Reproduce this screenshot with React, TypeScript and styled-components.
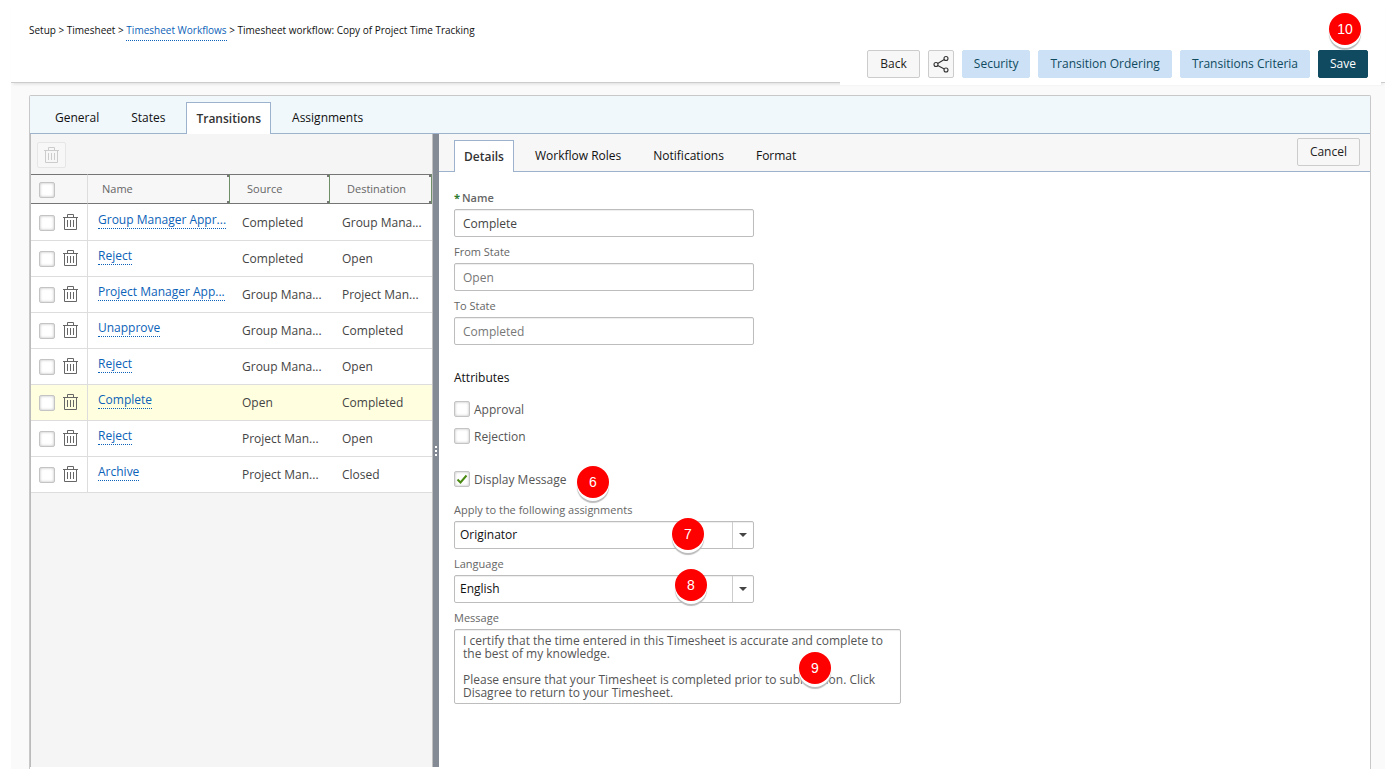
import React from "react";
import styled, { createGlobalStyle, css } from "styled-components";

const GlobalStyle = createGlobalStyle`
  *, *::before, *::after { box-sizing: border-box; }
  html, body, #root { height: 100%; }
  body {
    margin: 0;
    background: #fff;
    color: #111;
    font-family: "Open Sans", "Noto Sans", sans-serif;
    font-size: 12px;
    line-height: 16px;
  }
  button, input, select, textarea { font: inherit; color: inherit; margin: 0; }
`;

const Page = styled.div`
  min-height: 100%;
  display: flex;
  flex-direction: column;
  padding: 0 12px 12px 11px;
`;

const Header = styled.header`
  display: flex;
  justify-content: space-between;
  height: 83px;
  border-bottom: 1px solid #ccc;
  box-shadow: 0 3px 3px -2px #ddd;
  position: relative;
`;

const Breadcrumb = styled.nav`
  padding: 22px 0 0 18px;
  font-size: 10px;
  white-space: nowrap;

  a {
    color: #0b62b8;
    text-decoration: none;
    border-bottom: 1px dotted #0b62b8;
    padding-bottom: 3px;
  }
`;

const Actions = styled.div`
  display: flex;
  align-items: flex-start;
  gap: 8px;
  height: 85px;
  padding: 50px 13px 0 27px;
  margin-right: 4px;
  background: #fff;
`;

type Tone = "plain" | "soft" | "primary";

const tones = {
  plain: css`
    background: #f7f7f7;
    border-color: #ccc;
    color: #222;
  `,
  soft: css`
    background: #cce1f6;
    border-color: #cce1f6;
    color: #0f4a60;
  `,
  primary: css`
    background: #0f4a60;
    border-color: #0f4a60;
    color: #fff;
  `,
};

const Button = styled.button<{ $tone?: Tone }>`
  display: inline-flex;
  align-items: center;
  justify-content: center;
  height: 28px;
  padding: 0 ${(p) => (p.$tone ? 11 : 12)}px;
  border: 1px solid;
  border-radius: 2px;
  white-space: nowrap;
  ${(p) => tones[p.$tone ?? "plain"]}
`;

const ShareButton = styled(Button)`
  padding: 0 4px;
`;

const DeleteButton = styled(Button)`
  width: 29px;
  height: 26px;
  padding: 0;
  border-color: #e6e6e6;
  color: #ccc;
`;

const Anchor = styled.span`
  position: relative;
  display: inline-flex;
`;

const Badge = styled.span<{ $left: number; $top: number }>`
  position: absolute;
  left: ${(p) => p.$left}px;
  top: ${(p) => p.$top}px;
  width: 32px;
  height: 32px;
  border-radius: 50%;
  background: #f00;
  box-shadow: 0 3px 0 #fff, 0 5px 1px #bbb;
  color: #fff;
  font: 14px/32px "Liberation Sans", Arial, sans-serif;
  text-align: center;
  pointer-events: none;
  z-index: 2;
`;

const Body = styled.main`
  flex: 1;
  display: flex;
  flex-direction: column;
  padding: 12px 14px 0 18px;
  background: #fafafa;
`;

const Panel = styled.section`
  flex: 1;
  display: flex;
  flex-direction: column;
  border: 1px solid #c8c8c8;
  border-bottom: 0;
  border-radius: 2px 2px 0 0;
  background: #fff;
`;

const TabBar = styled.div<{ $main?: boolean }>`
  display: flex;
  align-items: flex-end;
  height: 38px;
  padding-left: ${(p) => (p.$main ? 9 : 10)}px;
  border-bottom: 1px solid #9db2cd;
  background: ${(p) => (p.$main ? "#f0f8fc" : "#f7f7f7")};
`;

const Tab = styled.button<{ $active?: boolean }>`
  height: 32px;
  margin-bottom: -1px;
  border: 1px solid transparent;
  border-bottom: 0;
  background: transparent;
  white-space: nowrap;
  ${(p) =>
    p.$active
      ? css`
          margin-left: 5px;
          margin-right: 5px;
          padding: 0 9px;
          background: #fff;
          border-color: #9db2cd;
          color: #333;
          font-weight: 600;
        `
      : css`
          margin-left: 15px;
          margin-right: 15px;
          padding: 0 0 1px;
        `}
`;

const Split = styled.div`
  flex: 1;
  display: grid;
  grid-template-columns: 402px 7px minmax(0, 1fr);
  padding-bottom: 2px;
`;

const ListPane = styled.div`
  border-left: 1px solid #bbb;
  background: #f5f5f5;
`;

const ListTools = styled.div`
  height: 40px;
  padding: 8px 6px;
`;

const Splitter = styled.div`
  display: flex;
  align-items: center;
  justify-content: center;
  border-left: 1px solid #c0c0c0;
  background: #848b94;
`;

const Grip = styled.span`
  width: 2px;
  height: 10px;
  background: repeating-linear-gradient(#fff 0 2px, transparent 2px 4px);
`;

const Grid = styled.table`
  width: 100%;
  table-layout: fixed;
  border-collapse: separate;
  border-spacing: 0;
  color: #444;
`;

const HeadCell = styled.th`
  height: 30px;
  padding: 0 0 0 17px;
  border: solid #757575;
  border-width: 1px 0;
  border-right: 1px solid #6f8f68;
  background:
    linear-gradient(#757575, #757575) right top / 2px 2px no-repeat,
    linear-gradient(#757575, #757575) right bottom / 2px 2px no-repeat,
    #f7f7f7;
  color: #666;
  font-size: 11px;
  font-weight: 400;
  text-align: left;
`;

const NameHead = styled(HeadCell)`
  padding-left: 14px;
`;

const CheckHead = styled(HeadCell)`
  padding: 2px 8px 0;
  border-right-color: #ddd;
  background: #f7f7f7;
`;

const Cell = styled.td`
  height: 36px;
  padding: 1px 0 0 12px;
  border-bottom: 1px solid #ddd;
  white-space: nowrap;
`;

const Row = styled.tr<{ $selected?: boolean }>`
  background: ${(p) => (p.$selected ? "#ffffdf" : "#fff")};

  &:first-child ${Cell} { height: 37px; }
`;

const ToolCell = styled(Cell)`
  padding: 0 8px;
  border-right: 1px solid #ddd;
`;

const LinkCell = styled(Cell)`
  padding: 0 0 4px 10px;

  a {
    display: inline-block;
    vertical-align: middle;
    height: 17px;
    max-width: 100%;
    color: #0b62b8;
    text-decoration: none;
    border-bottom: 1px dotted #0b62b8;
  }
`;

const RowTools = styled.div`
  display: flex;
  align-items: flex-end;
  gap: 8px;
  height: 17px;
`;

const IconButton = styled.button`
  display: flex;
  align-self: flex-start;
  padding: 0;
  border: 0;
  background: none;
  color: #666;
`;

const Check = styled.input`
  appearance: none;
  flex: none;
  display: block;
  width: 16px;
  height: 16px;
  border: 1px solid #c4c4c4;
  border-radius: 2px;
  background: #fff;
  box-shadow: inset 0 0 3px #bbb;

  &:checked {
    background: #fff
      url("data:image/svg+xml,%3Csvg xmlns='http://www.w3.org/2000/svg' viewBox='0 0 14 14'%3E%3Cpath d='M2.5 7.5 5.5 10.5 11.5 3.5' fill='none' stroke='%234a8a12' stroke-width='2'/%3E%3C/svg%3E");
  }
`;

const Details = styled.div`
  min-width: 0;
`;

const CancelSlot = styled.div`
  align-self: flex-start;
  margin: 4px 10px 0 auto;
`;

const Form = styled.form`
  padding: 18px 15px;
  color: #666;
`;

const Field = styled.div`
  position: relative;
  width: 300px;
  margin-bottom: 7px;
`;

const Label = styled.label<{ $required?: boolean }>`
  display: block;
  height: 19px;
  font-size: 11px;
  line-height: 16px;
  font-weight: ${(p) => (p.$required ? 600 : 400)};
`;

const Star = styled.span`
  color: #2e7a2e;
  font-weight: 700;
  margin-right: 2px;
`;

const inputBox = css`
  display: block;
  width: 100%;
  border: 1px solid #bdbdbd;
  border-radius: 2px;
  background: #fff;
  box-shadow: inset 0 1px 1px #eee;
`;

const TextInput = styled.input`
  ${inputBox}
  height: 28px;
  padding: 1px 8px 0;
  color: ${(p) => (p.readOnly ? "#777" : "#444")};
`;

const SelectBox = styled.div`
  position: relative;
  select {
    ${inputBox}
    appearance: none;
    height: 28px;
    padding: 0 28px 0 5px;
    color: #111;
  }
`;

const Arrow = styled.span`
  position: absolute;
  top: 1px;
  right: 1px;
  bottom: 1px;
  width: 21px;
  display: flex;
  align-items: center;
  justify-content: center;
  border-left: 1px solid #ccc;
  pointer-events: none;
`;

const MessageField = styled(Field)`
  width: 447px;
  max-width: 100%;
`;

const Message = styled.textarea`
  ${inputBox}
  height: 75px;
  padding: 4px 8px;
  color: #555;
  line-height: 13px;
  resize: none;
  overflow: hidden;
`;

const SectionTitle = styled.h2`
  margin: 25px 0 14px;
  color: #111;
  font-size: 12px;
  line-height: 16px;
  font-weight: 400;
`;

const CheckRow = styled.div<{ $last?: boolean }>`
  position: relative;
  display: flex;
  align-items: center;
  gap: 4px;
  height: 18px;
  margin-bottom: ${(p) => (p.$last ? 14 : 9)}px;
  label { color: #555; padding-top: 1px; }
`;

const CheckGroup = styled.div`
  margin-bottom: 25px;
`;

const TrashIcon = () => (
  <svg width="15" height="16" viewBox="0 0 15 16" fill="none" stroke="currentColor" aria-hidden="true">
    <path d="M0 3.5h15M4.5 3V.5h6V3M1.5 3.5v12h12v-12M4.5 6v7M7.5 6v7M10.5 6v7" />
  </svg>
);

const ShareIcon = () => (
  <svg width="16" height="18" viewBox="0 0 16 18" fill="none" stroke="#333" strokeWidth="1.1" aria-hidden="true">
    <circle cx="3" cy="9.5" r="2" />
    <circle cx="13" cy="3.5" r="2" />
    <circle cx="13" cy="15" r="2" />
    <path d="M4.7 8.5l6.6-4M4.7 10.5l6.6 3.5" />
  </svg>
);

const rows = [
  ["Group Manager Appr...", "Completed", "Group Mana..."],
  ["Reject", "Completed", "Open"],
  ["Project Manager App...", "Group Mana...", "Project Man..."],
  ["Unapprove", "Group Mana...", "Completed"],
  ["Reject", "Group Mana...", "Open"],
  ["Complete", "Open", "Completed"],
  ["Reject", "Project Man...", "Open"],
  ["Archive", "Project Man...", "Closed"],
];

const message = `I certify that the time entered in this Timesheet is accurate and complete to
the best of my knowledge.

Please ensure that your Timesheet is completed prior to submission. Click
Disagree to return to your Timesheet.`;

const DropDown = ({ id, value }: { id: string; value: string }) => (
  <SelectBox>
    <select id={id} defaultValue={value}>
      <option>{value}</option>
    </select>
    <Arrow>
      <svg width="8" height="4" viewBox="0 0 8 4" aria-hidden="true">
        <path d="M0 0h8L4 4z" fill="#444" />
      </svg>
    </Arrow>
  </SelectBox>
);

export default function App() {
  return (
    <>
      <GlobalStyle />
      <Page>
        <Header>
          <Breadcrumb aria-label="Breadcrumb">
            Setup &gt; Timesheet &gt; <a href="#workflows">Timesheet Workflows</a> &gt; Timesheet workflow: Copy of
            Project Time Tracking
          </Breadcrumb>
          <Actions>
            <Button>Back</Button>
            <ShareButton aria-label="Share">
              <ShareIcon />
            </ShareButton>
            <Button $tone="soft">Security</Button>
            <Button $tone="soft">Transition Ordering</Button>
            <Button $tone="soft">Transitions Criteria</Button>
            <Anchor>
              <Button $tone="primary">Save</Button>
              <Badge $left={11} $top={-37}>10</Badge>
            </Anchor>
          </Actions>
        </Header>
        <Body>
          <Panel>
            <TabBar $main role="tablist">
              <Tab role="tab">General</Tab>
              <Tab role="tab">States</Tab>
              <Tab role="tab" $active aria-selected>Transitions</Tab>
              <Tab role="tab">Assignments</Tab>
            </TabBar>
            <Split>
              <ListPane>
                <ListTools>
                  <DeleteButton disabled aria-label="Delete selected">
                    <TrashIcon />
                  </DeleteButton>
                </ListTools>
                <Grid>
                  <colgroup>
                    <col style={{ width: 57 }} />
                    <col style={{ width: 142 }} />
                    <col style={{ width: 100 }} />
                    <col />
                  </colgroup>
                  <thead>
                    <tr>
                      <CheckHead>
                        <Check type="checkbox" aria-label="Select all" />
                      </CheckHead>
                      <NameHead>Name</NameHead>
                      <HeadCell>Source</HeadCell>
                      <HeadCell>Destination</HeadCell>
                    </tr>
                  </thead>
                  <tbody>
                    {rows.map(([name, source, destination], i) => (
                      <Row key={i} $selected={name === "Complete"}>
                        <ToolCell>
                          <RowTools>
                            <Check type="checkbox" aria-label={`Select ${name}`} />
                            <IconButton aria-label={`Delete ${name}`}>
                              <TrashIcon />
                            </IconButton>
                          </RowTools>
                        </ToolCell>
                        <LinkCell>
                          <a href="#transition">{name}</a>
                        </LinkCell>
                        <Cell>{source}</Cell>
                        <Cell>{destination}</Cell>
                      </Row>
                    ))}
                  </tbody>
                </Grid>
              </ListPane>
              <Splitter>
                <Grip />
              </Splitter>
              <Details>
                <TabBar role="tablist">
                  <Tab role="tab" $active aria-selected>Details</Tab>
                  <Tab role="tab">Workflow Roles</Tab>
                  <Tab role="tab">Notifications</Tab>
                  <Tab role="tab">Format</Tab>
                  <CancelSlot>
                    <Button>Cancel</Button>
                  </CancelSlot>
                </TabBar>
                <Form>
                  <Field>
                    <Label htmlFor="name" $required>
                      <Star>*</Star>Name
                    </Label>
                    <TextInput id="name" defaultValue="Complete" />
                  </Field>
                  <Field>
                    <Label htmlFor="from">From State</Label>
                    <TextInput id="from" defaultValue="Open" readOnly />
                  </Field>
                  <Field>
                    <Label htmlFor="to">To State</Label>
                    <TextInput id="to" defaultValue="Completed" readOnly />
                  </Field>
                  <SectionTitle>Attributes</SectionTitle>
                  <CheckGroup>
                    <CheckRow>
                      <Check type="checkbox" id="approval" />
                      <label htmlFor="approval">Approval</label>
                    </CheckRow>
                    <CheckRow $last>
                      <Check type="checkbox" id="rejection" />
                      <label htmlFor="rejection">Rejection</label>
                    </CheckRow>
                  </CheckGroup>
                  <CheckRow $last>
                    <Check type="checkbox" id="display" defaultChecked />
                    <label htmlFor="display">Display Message</label>
                    <Badge $left={123} $top={-4}>6</Badge>
                  </CheckRow>
                  <Field>
                    <Label htmlFor="assignments">Apply to the following assignments</Label>
                    <DropDown id="assignments" value="Originator" />
                    <Badge $left={218} $top={16}>7</Badge>
                  </Field>
                  <Field>
                    <Label htmlFor="language">Language</Label>
                    <DropDown id="language" value="English" />
                    <Badge $left={221} $top={13}>8</Badge>
                  </Field>
                  <MessageField>
                    <Label htmlFor="message">Message</Label>
                    <Message id="message" defaultValue={message} />
                    <Badge $left={345} $top={42}>9</Badge>
                  </MessageField>
                </Form>
              </Details>
            </Split>
          </Panel>
        </Body>
      </Page>
    </>
  );
}
